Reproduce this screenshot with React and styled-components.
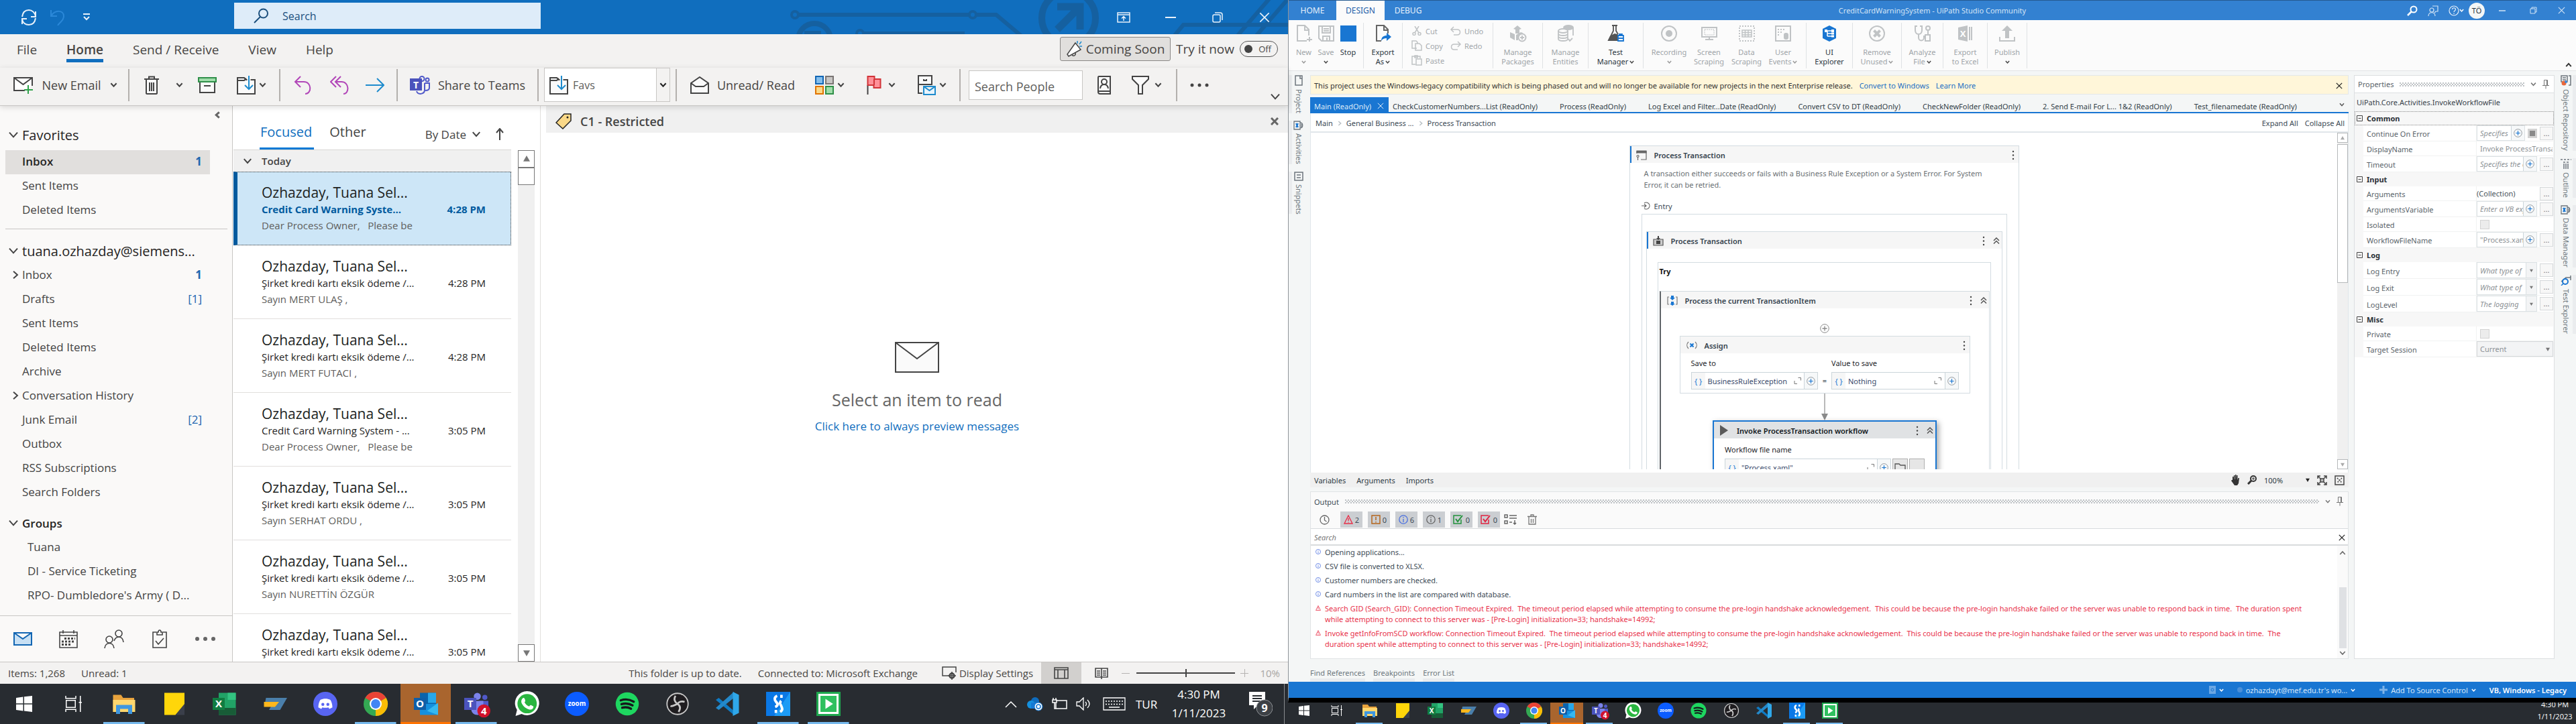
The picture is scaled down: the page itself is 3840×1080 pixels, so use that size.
import React from "react";
import styled, { createGlobalStyle, css } from "styled-components";

const Global = createGlobalStyle`
  *, *::before, *::after { box-sizing: border-box; }
  body { margin: 0; background: #282c31; font-family: "Open Sans", "Noto Sans", sans-serif; color: #444; }
  button, input, select { font: inherit; color: inherit; background: none; border: 0; padding: 0; margin: 0; border-radius: 0; outline: 0; min-width: 0; }
  button { white-space: nowrap; }
  select { appearance: none; }
  a { color: inherit; text-decoration: none; }
  svg { display: block; flex: none; }
`;

/* ---------- shared pieces ---------- */

const Desktop = styled.div`
  display: grid;
  grid-template-columns: 1fr 1fr;
  height: 100vh;
  overflow: hidden;
`;

const Screen = styled.div`
  display: flex;
  flex-direction: column;
  min-width: 0;
  min-height: 0;
`;

const Spacer = styled.div`
  flex: 1;
`;

const Icon = ({ w = 24, h = w, box = `0 0 ${w} ${h}`, color = "#444", sw = 2, children }) => (
  <svg width={w} height={h} viewBox={box} fill="none" stroke={color} strokeWidth={sw} aria-hidden="true">
    {children}
  </svg>
);

const turns = { down: 0, left: 90, up: 180, right: 270 };
const Chevron = ({ size = 12, dir = "down", color = "#444", sw = 2 }) => (
  <svg width={size} height={size} viewBox="0 0 12 12" fill="none" stroke={color} strokeWidth={(sw * 12) / size} aria-hidden="true">
    <path d="M1.5 3.5 6 8.5 10.5 3.5" transform={`rotate(${turns[dir]} 6 6)`} />
  </svg>
);

const Cross = ({ size = 12, color = "#444", sw = 1.5 }) => (
  <Icon w={size} box="0 0 12 12" color={color} sw={sw}>
    <path d="M1 1 11 11M11 1 1 11" />
  </Icon>
);

const Triangle = ({ up, color = "#777", size = 8 }) => (
  <svg width={size} height={size} viewBox="0 0 8 8" aria-hidden="true">
    <path d={up ? "M0 7 4 0 8 7Z" : "M0 1 4 8 8 1Z"} fill={color} />
  </svg>
);

const Pin = () => (
  <Icon w={10} h={14} color="#777" sw={1}>
    <path d="M2.500.5h5v8M2.500.5v8M0 8.500h10M5 8.500v5M6.500 1v7" />
  </Icon>
);

/* ---------- taskbar ---------- */

const Bar = styled.footer`
  flex: none;
  display: flex;
  height: ${(p) => (p.$compact ? 32 : 60)}px;
  background: #282c31;
  color: #fff;
  overflow: hidden;
`;

const TaskButton = styled.button`
  display: flex;
  justify-content: center;
  align-items: ${(p) => (p.$compact ? "flex-start" : "center")};
  width: ${(p) => (p.$compact ? 49 : 75)}px;
  background: ${(p) => (p.$active ? "#a9652e" : "none")};
  background-image: ${(p) =>
    p.$open ? "linear-gradient(#76b9ed, #76b9ed)" : p.$active ? "linear-gradient(#ff7300, #ff7300)" : "none"};
  background-repeat: no-repeat;
  background-position: bottom center;
  background-size: ${(p) => (p.$open ? "82%" : "100%")} ${(p) => (p.$compact ? 2 : 3)}px;
  &:first-child { width: ${(p) => (p.$compact ? 48 : 72)}px; }
  svg { overflow: visible; }
`;

const glyph = { stroke: "none", fontFamily: "Open Sans, sans-serif", fontWeight: 700, textAnchor: "middle" };

const apps = [
  { name: "Start", art: <path fill="#fff" stroke="none" d="M4 6 11 5v6.500H4zM12 4.800 20 4v7.500h-8zM4 12.500h7V19l-7-1zM12 12.500h8V20l-8-1z" /> },
  { name: "Task View", art: <path stroke="#fff" strokeWidth="1" d="M4 4v2.500h10V4M4.500 8.500h9v7h-9zM4 20v-2.500h10V20M18.500 4v16M17 10.500h3" /> },
  { name: "File Explorer", open: true, art: (<g stroke="none"><path fill="#e8a33d" d="M1 3h8l2 3h11v14H1z" /><path fill="#ffd76e" d="M1 8h22v12H1z" /><path fill="#3f97df" d="M4 13h16v9h-4v-5H8v5H4z" /></g>) },
  { name: "Sticky Notes", art: (<g stroke="none"><path fill="#ffd60a" d="M2 1h20v12l-9 10H2z" /><path fill="#3a3f4a" d="M22 12v11h-9z" /></g>) },
  { name: "Excel", art: (<g stroke="none"><path fill="#21a366" d="M6 1h17v22H6z" /><path fill="#33c481" d="M15 1h8v7h-8z" /><path fill="#185c37" d="M6 16h17v7H6z" /><path fill="#107c41" d="M0 6h12v12H0z" /><text x="6" y="15.500" fontSize="10" fill="#fff" {...glyph}>X</text></g>) },
  { name: "VMware", art: (<g stroke="none"><path fill="#4a7fab" d="M3 6h21l-7 12H6l4-7H2z" /><path fill="#ffb81c" d="M1 10h15l-4 5H1z" /></g>) },
  { name: "Discord", art: (<g stroke="none"><circle cx="12" cy="12" r="12" fill="#5865f2" /><path fill="#fff" d="M7 8c3-1.500 7-1.500 10 0 1.500 2.500 2 5 2 7.500l-3 1.500-1-1.500c-2 .5-4 .5-6 0L8 17l-3-1.500C5 13 5.500 10.500 7 8z" /><circle cx="9.500" cy="12.500" r="1.500" fill="#5865f2" /><circle cx="14.500" cy="12.500" r="1.500" fill="#5865f2" /></g>) },
  { name: "Chrome", open: true, art: (<g stroke="none"><circle cx="12" cy="12" r="12" fill="#34a853" /><path fill="#ea4335" d="M12 12 1.600 6a12 12 0 0 1 20.800 0z" /><path fill="#fbbc05" d="M12 12 22.400 6A12 12 0 0 1 12 24z" /><circle cx="12" cy="12" r="6" fill="#fff" /><circle cx="12" cy="12" r="4.600" fill="#4285f4" /></g>) },
  { name: "Outlook", active: true, art: (<g stroke="none"><path fill="#0a64ad" d="M6 1h16v12H6z" /><path fill="#28a8ea" d="M14 1h8v10h-8z" /><path fill="#1490df" d="M6 12h18v11H6z" /><path fill="#35b8f1" d="m24 11-11 8 11 4z" /><path fill="#0f5ea8" d="M0 6h12v12H0z" /><text x="6" y="15.500" fontSize="10" fill="#fff" {...glyph}>O</text></g>) },
  { name: "Teams", open: true, art: (<g stroke="none"><circle cx="13" cy="4.500" r="3.500" fill="#7b83eb" /><circle cx="20.500" cy="5.500" r="2.500" fill="#5059c9" /><path fill="#5059c9" d="M15 9h9v7c0 5-6 5-8 2z" /><path fill="#7b83eb" d="M7 9h12v8c0 8-12 8-12 0z" /><path fill="#4b53bc" d="M0 6h12v12H0z" /><text x="6" y="15.500" fontSize="10" fill="#fff" {...glyph}>T</text><circle cx="19.500" cy="19" r="6.500" fill="#d0112b" /><text x="19.500" y="22.500" fontSize="10" fill="#fff" {...glyph}>4</text></g>) },
  { name: "WhatsApp", art: (<g stroke="none"><path fill="#fff" d="m1 24 1.500-6A12 12 0 1 1 7 22z" /><circle cx="12.500" cy="11.800" r="9.600" fill="#2ab540" /><path fill="#fff" d="M8 6.500c1-1 2-.5 2.500 1.500s-.5 2-.5 2.500c1 2 2.500 3.200 4.500 4 .6-.3 1-1.500 1.800-1.300l2.500 1.300c0 3-2.500 3.500-4.500 3-3.500-1-6.500-4-7.500-7-.3-1.500.2-3 1.200-4z" /></g>) },
  { name: "Zoom", art: (<g stroke="none"><circle cx="12" cy="12" r="12" fill="#0b5cff" /><text x="12" y="14" fontSize="6.500" fill="#fff" {...glyph}>zoom</text></g>) },
  { name: "Spotify", art: (<g><circle cx="12" cy="12" r="11.500" fill="#1ed760" stroke="none" /><path stroke="#16191c" strokeWidth="2.200" strokeLinecap="round" d="M5.500 8.500c4.500-1.500 9-1 13 1.300M6.300 12.300c4-1.200 7.500-.8 11 1.200M7 15.800c3.200-.9 6-.6 8.800 1" /></g>) },
  { name: "OBS Studio", art: (<g><circle cx="12" cy="12" r="10.500" fill="#1f1d20" stroke="#c9c9c9" strokeWidth="1.200" /><path stroke="#c9c9c9" strokeWidth="1.800" d="M10 4c-2 3-1 6 2 8M19 10c-3-1-6 0-7 2M13 20c2-3 2-6-1-8M12 12c-3 1-5 3-7 2" /></g>) },
  { name: "Visual Studio Code", art: (<g stroke="none"><path fill="#0f7bc4" d="m0 8 3-2 15 13v4z" /><path fill="#2489ca" d="m0 16 3 2L18 6V0z" /><path fill="#2fa8ea" d="m17 0 6 3v18l-6 3z" /></g>) },
  { name: "UiPath Studio", open: true, art: (<g><path fill="#0a78e6" stroke="none" d="M0 0h24v24H0z" /><path fill="#1c9bf5" stroke="none" d="M24 0v24H8z" /><path stroke="#fff" strokeWidth="2.600" d="M11 4c-3 1-3 4-1 6s2 4-1 5M15 9c-2 2-1 3 0 5s2 4-1 6" /><path fill="#fff" stroke="none" d="M14 3h2.500v3H14zM8.500 18H11v3H8.500z" /></g>) },
  { name: "UiPath Assistant", open: true, art: (<g stroke="none"><path fill="#1fa84f" d="M0 0h24v24H0z" /><path fill="#fff" d="M2 2h20v20H2z" /><path fill="#2fc05f" d="M4 4h16v16H4z" /><path fill="#fff" d="m9 7 7.500 5L9 17z" /></g>) },
];

const TaskApps = ({ compact }) =>
  apps.map((a) => (
    <TaskButton key={a.name} aria-label={a.name} $compact={compact} $open={a.open} $active={a.active}>
      <svg width={compact ? 24 : 36} height={compact ? 24 : 36} viewBox="0 0 24 24" fill="none">{a.art}</svg>
    </TaskButton>
  ));

const Tray = styled.div`
  display: flex;
  align-items: center;
  font-size: 17px;
`;
const TrayCell = styled.div`
  display: flex;
  justify-content: center;
  width: ${(p) => p.$w}px;
`;
const Clock = styled.time`
  display: flex;
  flex-direction: column;
  justify-content: flex-end;
  align-items: center;
  width: ${(p) => (p.$compact ? 63 : 112)}px;
  padding-bottom: ${(p) => (p.$compact ? 2 : 1)}px;
  font-size: ${(p) => (p.$compact ? 11 : 17)}px;
  line-height: ${(p) => (p.$compact ? 18 : 28)}px;
`;
const DesktopEdge = styled.div`
  width: 6px;
  align-self: stretch;
  border-left: 1px solid #8a8d90;
`;

/* ---------- mail window ---------- */

const MailTitle = styled.header`
  position: relative;
  flex: none;
  display: flex;
  align-items: center;
  height: 51px;
  background: #106ebe;
  overflow: hidden;
`;
const Circuit = styled.svg`
  position: absolute;
  right: 0;
  top: 0;
`;
const QuickTools = styled.div`
  display: flex;
  align-items: center;
  width: 349px;
  padding-left: 21px;
`;
const QuickButton = styled.button`
  display: flex;
  justify-content: center;
  width: 43px;
`;
const TitleSearch = styled.label`
  display: flex;
  align-items: center;
  gap: 20px;
  width: 457px;
  height: 39px;
  margin-bottom: 4px;
  padding-left: 29px;
  background: #deecf9;
  color: #1b4f7d;
  font-size: 16px;
  input { flex: 1; }
  input::placeholder { color: #1b4f7d; opacity: 1; }
`;
const WindowButton = styled.button`
  position: relative;
  display: flex;
  justify-content: center;
  align-items: center;
  width: ${(p) => p.$w || 70}px;
`;

const TabRow = styled.nav`
  flex: none;
  display: flex;
  align-items: center;
  height: 50px;
  padding: 0 15px 0 25px;
  background: #f3f2f1;
  font-size: 19px;
  color: #484644;
`;
const MenuTab = styled.button`
  height: 34px;
  margin-right: 44px;
  line-height: 28px;
  border-bottom: 5px solid ${(p) => (p.$on ? "#106ebe" : "transparent")};
  font-weight: ${(p) => (p.$on ? 600 : 400)};
`;
const ComingSoon = styled.button`
  display: flex;
  align-items: center;
  justify-content: center;
  gap: 6px;
  width: 165px;
  height: 36px;
  margin: 0 8px 6px 0;
  background: #e1dfdd;
  border: 1px solid #8a8886;
  border-radius: 3px;
`;
const TryToggle = styled.label`
  display: flex;
  align-items: center;
  gap: 8px;
  height: 36px;
  margin-bottom: 6px;
`;
const Toggle = styled.span`
  display: flex;
  align-items: center;
  justify-content: space-between;
  width: 57px;
  height: 24px;
  padding: 0 9px 0 6px;
  border: 1px solid #555;
  border-radius: 12px;
  font-size: 13px;
  input { appearance: none; width: 12px; height: 12px; border-radius: 50%; background: #444; }
`;

const Toolbar = styled.div`
  position: relative;
  z-index: 1;
  flex: none;
  display: flex;
  align-items: center;
  height: 57px;
  padding: 0 11px 5px 18px;
  background: #f3f2f1;
  border-bottom: 1px solid #c8c6c4;
  box-shadow: 0 2px 8px rgba(0, 0, 0, 0.14);
  font-size: 18px;
  color: #484644;
`;
const Cmd = styled.button`
  display: flex;
  align-items: center;
  justify-content: center;
  gap: ${(p) => p.$gap || 5}px;
  width: ${(p) => p.$w}px;
`;
const Rule = styled.i`
  width: 2px;
  height: 48px;
  margin: 0 5px;
  background: #b3b0ad;
`;
const FolderCombo = styled.label`
  display: flex;
  align-items: center;
  width: 188px;
  height: 51px;
  margin: 0 3px;
  padding-left: 7px;
  background: #fff;
  border: 1px solid #c8c6c4;
  font-size: 16px;
  color: #605e5c;
  select { flex: 1; padding-left: 7px; }
`;
const ComboArrow = styled.span`
  display: flex;
  align-items: center;
  justify-content: center;
  align-self: stretch;
  width: 20px;
  background: #f3f2f1;
  border-left: 1px solid #c8c6c4;
  pointer-events: none;
`;
const PeopleSearch = styled.input`
  width: 170px;
  height: 44px;
  margin: 0 7px;
  padding: 4px 0 0 8px;
  background: #fff;
  border: 1px solid #c8c6c4;
  &::placeholder { color: #605e5c; opacity: 1; }
`;
const CollapseRibbon = styled.button`
  align-self: flex-end;
`;

const MailBody = styled.div`
  flex: 1;
  display: flex;
  min-height: 0;
  background: #fff;
`;
const FolderPane = styled.aside`
  flex: none;
  display: flex;
  flex-direction: column;
  width: 347px;
  background: #faf9f8;
  border-right: 1px solid #c8c6c4;
  color: #444;
`;
const CollapsePane = styled.button`
  display: flex;
  align-self: flex-end;
  align-items: center;
  height: 26px;
  padding-right: 16px;
`;
const FolderHead = styled.button`
  display: flex;
  align-items: center;
  gap: 5px;
  height: 36px;
  padding: 0 0 2px 12px;
  font-size: ${(p) => (p.$small ? 17 : 20)}px;
  font-weight: ${(p) => (p.$small ? 600 : 400)};
  color: #252423;
`;
const FolderList = styled.ul`
  list-style: none;
  margin: 0;
  padding: ${(p) => p.$top || 0}px 0 ${(p) => p.$bottom || 0}px;
`;
const Folder = styled.li`
  display: grid;
  grid-template-columns: 25px 1fr auto;
  align-items: center;
  height: 36px;
  margin: 0 33px 0 8px;
  padding: 0 12px 3px ${(p) => (p.$nested ? 8 : 0)}px;
  font-size: 17px;
  white-space: nowrap;
  ${(p) => p.$on && css`background: #e1dfdd; color: #252423; font-weight: 600;`}
`;
const FolderLink = styled.a`
  grid-column: 2;
`;
const Twisty = styled.span`
  grid-column: 1;
  grid-row: 1;
  padding-left: 8px;
`;
const Count = styled.span`
  color: #2266b0;
  font-weight: ${(p) => (p.$strong ? 700 : 400)};
`;
const FolderDivider = styled.hr`
  margin: 9px 7px 15px 8px;
  border: 0;
  border-top: 1px solid #c8c6c4;
`;
const ModuleBar = styled.nav`
  display: flex;
  align-items: center;
  height: 69px;
  margin-top: auto;
  border-top: 1px solid #c8c6c4;
`;
const ModuleButton = styled.button`
  display: flex;
  justify-content: center;
  width: 68px;
`;

const ListPane = styled.section`
  flex: none;
  display: flex;
  width: 459px;
  padding: 0 8px 0 1px;
  border-right: 1px solid #e1dfdd;
`;
const ListColumn = styled.div`
  flex: 1;
  min-width: 0;
  display: flex;
  flex-direction: column;
  overflow: hidden;
`;
const ListHead = styled.div`
  flex: none;
  display: flex;
  align-items: flex-end;
  height: 66px;
  padding: 0 8px 0 39px;
  border-bottom: 1px solid #d8d6d4;
`;
const ListTab = styled.button`
  height: 50px;
  margin-right: 22px;
  padding: 0 3px 0 1px;
  border-bottom: 3px solid ${(p) => (p.$on ? "#0078d4" : "transparent")};
  font-size: 20px;
  color: ${(p) => (p.$on ? "#106ebe" : "#444")};
`;
const SortButton = styled.button`
  display: flex;
  align-items: center;
  gap: 8px;
  height: 46px;
  font-size: 17px;
`;
const DayHead = styled.button`
  flex: none;
  display: flex;
  align-items: center;
  gap: 14px;
  height: 32px;
  padding-left: 14px;
  background: #f0f0f0;
  font-size: 15px;
  font-weight: 600;
`;
const Mail = styled.article`
  flex: none;
  height: 110px;
  padding: 16px 38px 0 ${(p) => (p.$on ? 36 : 42)}px;
  border-bottom: 1px solid #e1dfdd;
  ${(p) =>
    p.$on &&
    css`
      background: #cde6f7;
      border: 1px dotted #333;
      border-left: 6px solid #005a9e;
      padding-top: 15px;
      padding-right: 37px;
    `}
`;
const Sender = styled.div`
  font-size: 21px;
  line-height: 30px;
  color: #201f1e;
`;
const SubjectLine = styled.div`
  display: flex;
  justify-content: space-between;
  font-size: 15px;
  line-height: 20px;
  white-space: nowrap;
  color: ${(p) => (p.$on ? "#005a9e" : "#252423")};
  font-weight: ${(p) => (p.$on ? 700 : 400)};
`;
const Preview = styled.div`
  font-size: 15px;
  line-height: 28px;
  color: #605e5c;
  white-space: pre;
`;
const ListScroll = styled.div`
  display: flex;
  flex-direction: column;
  width: 25px;
  margin: 66px 0 0 10px;
  background: #f0f0f0;
`;
const ScrollButton = styled.button`
  display: flex;
  align-items: center;
  justify-content: center;
  height: ${(p) => p.$h || 26}px;
  background: #fff;
  border: 1px solid ${(p) => p.$line || "#777"};
`;

const Reading = styled.main`
  flex: 1;
  display: flex;
  flex-direction: column;
  margin-left: 8px;
  min-width: 0;
`;
const LabelBar = styled.div`
  display: flex;
  align-items: center;
  gap: 13px;
  height: 40px;
  padding: 5px 14px 0 14px;
  background: #f0f0f0;
  font-size: 18px;
  font-weight: 600;
`;
const EmptyState = styled.div`
  flex: 1;
  display: flex;
  flex-direction: column;
  align-items: center;
  justify-content: center;
  padding-bottom: 28px;
`;
const EmptyTitle = styled.h2`
  margin: 23px 0 11px;
  font-size: 25px;
  font-weight: 400;
  line-height: 34px;
  color: #666;
`;
const EmptyLink = styled.a`
  font-size: 17px;
  line-height: 24px;
  color: #106ebe !important;
`;

const MailStatus = styled.div`
  flex: none;
  display: flex;
  align-items: center;
  height: 33px;
  padding: 0 12px;
  background: #f3f2f1;
  border-top: 1px solid #c8c6c4;
  font-size: 15px;
  white-space: nowrap;
  color: #484644;
`;
const StatusText = styled.span`
  margin-right: 24px;
`;
const ViewButton = styled.button`
  display: flex;
  align-items: center;
  justify-content: center;
  gap: 4px;
  align-self: stretch;
  width: ${(p) => p.$w || 60}px;
  background: ${(p) => (p.$on ? "#d2d0ce" : "none")};
`;
const ZoomRange = styled.input`
  appearance: none;
  width: 147px;
  height: 12px;
  margin: 0 8px;
  background: linear-gradient(#444, #444) center / 100% 2px no-repeat;
  &::-webkit-slider-thumb { appearance: none; width: 2px; height: 12px; background: #444; }
`;
const ZoomStep = styled.button`
  width: 14px;
`;
const ZoomValue = styled.output`
  width: 45px;
  text-align: right;
  color: #a8a6a4;
`;

const folders = [
  { name: "Inbox", count: "1", strong: true, more: true },
  { name: "Drafts", count: "[1]" },
  { name: "Sent Items" },
  { name: "Deleted Items" },
  { name: "Archive" },
  { name: "Conversation History", more: true },
  { name: "Junk Email", count: "[2]" },
  { name: "Outbox" },
  { name: "RSS Subscriptions" },
  { name: "Search Folders" },
];
const FolderRow = ({ name, count, strong, more, on, nested }) => (
  <Folder $on={on} $nested={nested}>
    {more && <Twisty><Chevron dir="right" size={14} /></Twisty>}
    <FolderLink href="#">{name}</FolderLink>
    {count && <Count $strong={strong}>{count}</Count>}
  </Folder>
);

const kredi = "Şirket kredi kartı eksik ödeme /...";
const mails = [
  { subject: "Credit Card Warning Syste...", time: "4:28 PM", text: "Dear Process Owner,   Please be", on: true },
  { subject: kredi, time: "4:28 PM", text: "Sayın MERT ULAŞ ," },
  { subject: kredi, time: "4:28 PM", text: "Sayın MERT FUTACI ," },
  { subject: "Credit Card Warning System - ...", time: "3:05 PM", text: "Dear Process Owner,   Please be" },
  { subject: kredi, time: "3:05 PM", text: "Sayın SERHAT ORDU ," },
  { subject: kredi, time: "3:05 PM", text: "Sayın NURETTİN ÖZGÜR" },
  { subject: kredi, time: "3:05 PM", text: "" },
];

const MoveIcon = () => (
  <Icon w={28} sw={2}>
    <path fill="#fafafa" d="M1 3h10l3 3h13v21H1z" /><path d="M1 7h10l3-3" />
    <path stroke="#fafafa" strokeWidth="5" d="M18 0v17" />
    <path stroke="#1e8bcd" d="M18 0v20M12 14l6 6 6-6" />
  </Icon>
);
const ReplyArt = "M10 1 2 9l8 8M2 9h13c12 0 12 18 2 18";

function MailWindow() {
  return (
    <Screen>
      <MailTitle>
        <Circuit width="750" height="51" viewBox="1170 0 750 51" fill="none" stroke="#1560a0" strokeWidth="6" aria-hidden="true">
          <circle cx="1185" cy="22" r="5" strokeWidth="4" /><path d="M1191 22h253M1455 22h30l38 32" /><circle cx="1450" cy="22" r="5" strokeWidth="4" />
          <circle cx="1214" cy="59" r="24" strokeWidth="8" /><path d="M1199 49h25" />
          <circle cx="1282" cy="50" r="5" strokeWidth="4" /><path d="M1288 50h150" />
          <circle cx="1593" cy="27" r="40" strokeWidth="10" /><path strokeWidth="11" d="M1576 10h34v34M1610 10l-34 34" />
          <path d="M1750 54l14-17h156M1844 54l50-58M1872 54l50-58" />
        </Circuit>
        <QuickTools>
          <QuickButton aria-label="Send and receive">
            <Icon color="#e8f1fa"><path d="M2 11C3 4 7 1 12 1s9 4 10 9M22 3v8h-7M22 13c-1 7-5 10-10 10S3 20 2 15M2 22v-8h7" /></Icon>
          </QuickButton>
          <QuickButton aria-label="Undo">
            <Icon color="#2b88d8"><path d="M2 1v9h9M2 10C8 0 21 1 21 10c0 7-5 8-9 14" /></Icon>
          </QuickButton>
          <QuickButton aria-label="Customize toolbar">
            <Icon w={12} color="#e8f1fa"><path d="M1 1h10M2 5l4 4 4-4" /></Icon>
          </QuickButton>
        </QuickTools>
        <TitleSearch>
          <Icon w={23} color="#1b4f7d"><circle cx="14.500" cy="8" r="6.500" /><path d="m10 13-9 9" /></Icon>
          <input placeholder="Search" aria-label="Search mail" />
        </TitleSearch>
        <Spacer />
        <WindowButton aria-label="Ribbon display options"><Icon w={20} h={16} color="#e8f1fa" sw={1.5}><path d="M1 1h18v14H1zM1 4h18M10 13V7M7 9.500l3-3 3 3" /></Icon></WindowButton>
        <WindowButton aria-label="Minimize"><Icon w={16} h={2} color="#e8f1fa"><path d="M0 1h16" /></Icon></WindowButton>
        <WindowButton aria-label="Restore"><Icon w={16} color="#e8f1fa" sw={1.5}><rect x="1" y="4" width="11" height="11" rx="2" /><path d="M4 1h8q3 0 3 3v8" /></Icon></WindowButton>
        <WindowButton aria-label="Close"><Cross size={16} color="#e8f1fa" sw={1.2} /></WindowButton>
      </MailTitle>

      <TabRow>
        <MenuTab>File</MenuTab>
        <MenuTab $on>Home</MenuTab>
        <MenuTab>Send / Receive</MenuTab>
        <MenuTab>View</MenuTab>
        <MenuTab>Help</MenuTab>
        <Spacer />
        <ComingSoon>
          <Icon w={24} sw={1.5}><path fill="#fff" d="M14 3 2 20l2 3 18-10z" /><path d="M9 21c3 3 6 0 5-3" /><path stroke="#1e8bcd" d="M17 0v4M23 1l-3 4M24 8h-4" /></Icon>
          Coming Soon
        </ComingSoon>
        <TryToggle>
          Try it now
          <Toggle><input type="checkbox" role="switch" />Off</Toggle>
        </TryToggle>
      </TabRow>

      <Toolbar>
        <Cmd $w={135} $gap={12}>
          <Icon w={30} h={26}><path fill="#fff" d="M17 21H1V2h27v12" /><path d="m1 2 13.500 10L28 2" /><path stroke="#2fa24a" d="M22 13v13M16 20h13" /></Icon>
          New Email
        </Cmd>
        <Cmd $w={33} aria-label="New item options"><Chevron size={11} /></Cmd>
        <Rule />
        <Cmd $w={56} aria-label="Delete"><Icon w={22} h={28}><path fill="#fafafa" d="M3 6v20q0 1 2 1h12q2 0 2-1V6" /><path d="M0 5h22M7 5V1.500h8V5M8 10v13M11 10v13M14 10v13" /></Icon></Cmd>
        <Cmd $w={26} aria-label="Delete options"><Chevron size={11} /></Cmd>
        <Cmd $w={58} aria-label="Archive"><Icon w={28} h={24}><path fill="#fafafa" d="M3 7h22v16H3z" /><path fill="#a0dcaa" stroke="#2f8f49" d="M1 1h26v6H1z" /><path d="M9 13h10" /></Icon></Cmd>
        <Cmd $w={73} aria-label="Move"><MoveIcon /><Chevron size={11} /></Cmd>
        <Rule />
        <Cmd $w={58} aria-label="Reply"><Icon w={28} color="#b146b8"><path d={ReplyArt} /></Icon></Cmd>
        <Cmd $w={51} aria-label="Reply all"><Icon w={30} h={28} color="#b146b8"><path d="M9 1 1 9l8 8M16 1 8 9l8 8M8 9h9c12 0 12 18 3 18" /></Icon></Cmd>
        <Cmd $w={54} aria-label="Forward"><Icon w={28} h={22} color="#1e8bcd"><path d="M0 11h27M17 1l10 10-10 10" /></Icon></Cmd>
        <Rule />
        <Cmd $w={198} $gap={12}>
          <Icon w={30} h={28}><g stroke="#5059c9"><circle cx="18" cy="4.500" r="3.500" /><circle cx="26" cy="6" r="2.500" /><path d="M22 11h7v7c0 3-3 4-6 4M22 11v10c0 7-10 8-12 2" /></g><path fill="#4b53bc" stroke="none" d="M0 4h18v18H0z" /><text x="9" y="18.500" fontSize="14" fill="#fff" {...glyph}>T</text></Icon>
          Share to Teams
        </Cmd>
        <Rule />
        <FolderCombo>
          <MoveIcon />
          <select aria-label="Quick steps"><option>Favs</option></select>
          <ComboArrow><Chevron size={11} color="#222" /></ComboArrow>
        </FolderCombo>
        <Rule />
        <Cmd $w={186} $gap={12}>
          <Icon w={28} h={26}><path fill="#fafafa" d="M1 10 14 1l13 9v15H1z" /><path d="m1 10 7 5h12l7-5" /></Icon>
          Unread/ Read
        </Cmd>
        <Cmd $w={73} aria-label="Categorize">
          <Icon w={28}><path fill="#83beec" stroke="#1266b3" d="M1 1h11v11H1z" /><path fill="#c8c6c4" stroke="#7a7574" d="M16 1h11v11H16z" /><path fill="#fad888" stroke="#e07300" d="M1 16h11v11H1z" /><path fill="#a0dcaa" stroke="#309048" d="M16 16h11v11H16z" /></Icon>
          <Chevron size={11} />
        </Cmd>
        <Cmd $w={80} $gap={10} aria-label="Follow up">
          <Icon w={22} h={28}><path d="M1.500 14v14" /><path fill="#ff9199" stroke="#d13438" d="M1.500 1h10v4h9v13h-10v-4h-9zM11 5v9" /></Icon>
          <Chevron size={11} />
        </Cmd>
        <Cmd $w={72} aria-label="Rules">
          <Icon w={28} h={30}><path fill="#fafafa" d="M8 27H2V1h20v13H2" /><path d="M10 6v2h4V6" /><path fill="#e8f4fc" stroke="#1e8bcd" d="M10 17h17v12H10zM10 17l8.500 6 8.500-6" /></Icon>
          <Chevron size={11} />
        </Cmd>
        <Rule />
        <PeopleSearch placeholder="Search People" aria-label="Search People" />
        <Cmd $w={50} aria-label="Address book"><Icon w={20} h={28}><path fill="#fafafa" d="M2 1h17v26H4q-3 0-3-3V3q0-2 1-2zM1 23h18" /><circle cx="10" cy="9" r="4" /><path d="M4 19c1-8 11-8 12 0" /></Icon></Cmd>
        <Cmd $w={77} $gap={8} aria-label="Filter email"><Icon w={26} h={28}><path fill="#fafafa" d="M1 1h24v4l-9 9v13h-6V14L1 5z" /></Icon><Chevron size={11} /></Cmd>
        <Rule />
        <Cmd $w={56} aria-label="More commands"><Icon w={28} h={6}><g fill="#444" stroke="none"><circle cx="3" cy="3" r="2.500" /><circle cx="14" cy="3" r="2.500" /><circle cx="25" cy="3" r="2.500" /></g></Icon></Cmd>
        <Spacer />
        <CollapseRibbon aria-label="Collapse ribbon"><Chevron size={16} /></CollapseRibbon>
      </Toolbar>

      <MailBody>
        <FolderPane>
          <CollapsePane aria-label="Collapse folder pane"><Chevron dir="left" size={11} sw={3} color="#666" /></CollapsePane>
          <FolderHead><Chevron size={16} />Favorites</FolderHead>
          <FolderList $top={4}>
            <FolderRow name="Inbox" count="1" strong on />
            <FolderRow name="Sent Items" />
            <FolderRow name="Deleted Items" />
          </FolderList>
          <FolderDivider />
          <FolderHead><Chevron size={16} />tuana.ozhazday@siemens...</FolderHead>
          <FolderList $bottom={10}>
            {folders.map((f) => <FolderRow key={f.name} {...f} />)}
          </FolderList>
          <FolderHead $small><Chevron size={16} />Groups</FolderHead>
          <FolderList>
            <FolderRow nested name="Tuana" />
            <FolderRow nested name="DI - Service Ticketing" />
            <FolderRow nested name="RPO- Dumbledore's Army ( D..." />
          </FolderList>
          <ModuleBar>
            <ModuleButton aria-label="Mail"><Icon w={28} h={20} color="#1266b3"><path fill="#c7e0f4" d="M1 1h26v18H1zM1 1l13 9L27 1" /></Icon></ModuleButton>
            <ModuleButton aria-label="Calendar"><Icon w={28} h={28} sw={1.6}><path d="M1 4h26v23H1zM1 9h26M6 1v5M22 1v5" /><path strokeDasharray="3 2" strokeWidth="3" d="M8 13.500h16M4 18h20M4 22.500h13" /></Icon></ModuleButton>
            <ModuleButton aria-label="People"><Icon w={30} h={28} sw={1.6}><circle cx="22" cy="6" r="5" /><circle cx="8" cy="15" r="5" /><path d="M1 28c1-10 13-10 14 0M15 17c3-8 13-8 14 2" /></Icon></ModuleButton>
            <ModuleButton aria-label="Tasks"><Icon w={22} h={28} sw={1.6}><path d="M6 4H1v23h20V4h-5M7 8V4h2c0-4 4-4 4 0h2v4zM5 17l4 5 8-9" /></Icon></ModuleButton>
            <ModuleButton aria-label="More"><Icon w={30} h={6}><g fill="#666" stroke="none"><circle cx="3" cy="3" r="3" /><circle cx="15" cy="3" r="3" /><circle cx="27" cy="3" r="3" /></g></Icon></ModuleButton>
          </ModuleBar>
        </FolderPane>

        <ListPane>
          <ListColumn>
            <ListHead>
              <ListTab $on>Focused</ListTab>
              <ListTab>Other</ListTab>
              <Spacer />
              <SortButton>By Date<Chevron size={14} /></SortButton>
              <SortButton aria-label="Sort direction"><Icon w={37} h={18}><path d="M28 18V1M23 7l5-6 5 6" /></Icon></SortButton>
            </ListHead>
            <DayHead><Chevron size={14} />Today</DayHead>
            {mails.map((m, i) => (
              <Mail key={i} $on={m.on}>
                <Sender>Ozhazday, Tuana Sel...</Sender>
                <SubjectLine $on={m.on}><span>{m.subject}</span><span>{m.time}</span></SubjectLine>
                <Preview>{m.text}</Preview>
              </Mail>
            ))}
          </ListColumn>
          <ListScroll>
            <ScrollButton aria-label="Scroll up"><Triangle up size={10} /></ScrollButton>
            <ScrollButton aria-label="Scroll position" />
            <Spacer />
            <ScrollButton aria-label="Scroll down"><Triangle size={10} /></ScrollButton>
          </ListScroll>
        </ListPane>

        <Reading>
          <LabelBar>
            <Icon w={24} color="#222" sw={1.5}><path fill="#fad888" d="M13 1h10v10L11 23 1 14z" /><circle cx="18" cy="6" r="1.500" fill="#222" stroke="none" /></Icon>
            C1 - Restricted
            <Spacer />
            <button aria-label="Close label"><Cross size={12} color="#666" sw={3} /></button>
          </LabelBar>
          <EmptyState>
            <Icon w={66} h={46}><path fill="#fafafa" d="M1 1h64v44H1zM1 1l32 24L65 1" /></Icon>
            <EmptyTitle>Select an item to read</EmptyTitle>
            <EmptyLink href="#">Click here to always preview messages</EmptyLink>
          </EmptyState>
        </Reading>
      </MailBody>

      <MailStatus>
        <StatusText>Items: 1,268</StatusText>
        <StatusText>Unread: 1</StatusText>
        <Spacer />
        <StatusText>This folder is up to date.</StatusText>
        <StatusText>Connected to: Microsoft Exchange</StatusText>
        <ViewButton $w={160}>
          <Icon w={22} h={20} sw={1.5}><path d="M10 14H1V1h20v8" /><circle cx="15" cy="14" r="3.500" strokeWidth="2.500" /><path d="M15 8v12M9 14h12" strokeWidth="1.500" /></Icon>
          Display Settings
        </ViewButton>
        <ViewButton $on aria-label="Normal view"><Icon w={22} h={18} sw={1.6}><path d="M1 1h20v16H1zM1 4h20M6 4v13M16 4v13" /></Icon></ViewButton>
        <ViewButton aria-label="Reading view"><Icon w={20} h={18} sw={1.6}><path d="M10 2v16M10 2H1v13h9M10 2h9v13h-9M3 6h5M3 9h5M3 12h5M12 6h5M12 9h5M12 12h5" /></Icon></ViewButton>
        <ZoomStep aria-label="Zoom out"><Icon w={12} color="#b5b3b1" sw={1}><path d="M0 6.500h12" /></Icon></ZoomStep>
        <ZoomRange type="range" aria-label="Zoom" />
        <ZoomStep aria-label="Zoom in"><Icon w={12} color="#b5b3b1" sw={1}><path d="M0 6.500h12M6.500 0v12" /></Icon></ZoomStep>
        <ZoomValue>10%</ZoomValue>
      </MailStatus>

      <Bar>
        <TaskApps />
        <Spacer />
        <Tray>
          <TrayCell $w={36}><Icon w={18} h={11} color="#fff" sw={1.5}><path d="m1 10 8-8 8 8" /></Icon></TrayCell>
          <TrayCell $w={36}><Icon w={24} h={22}><g stroke="none"><circle cx="12" cy="7" r="6" fill="#0f6cbd" /><circle cx="6" cy="12" r="6" fill="#1490df" /><path fill="#1478d4" d="M6 9h14v9H6z" /></g><circle cx="17" cy="15" r="6" fill="#fff" stroke="#1478d4" strokeWidth="1" /><circle cx="17" cy="15" r="3" stroke="#1478d4" strokeWidth="1.500" /></Icon></TrayCell>
          <TrayCell $w={36}><Icon w={24} h={20} color="#fff" sw={1.5}><path d="M8 5h15v12H7V9M2 4h6v4H2zM3 1v3M7 1v3M5 8v9h2" /></Icon></TrayCell>
          <TrayCell $w={38}><Icon w={24} h={20} color="#fff" sw={1.3}><path d="M1 7h4l6-6v18l-6-6H1zM14 7c2 2 2 4 0 6M17 4c4 4 4 8 0 12" /></Icon></TrayCell>
          <TrayCell $w={52}><Icon w={34} h={20} color="#fff" sw={1.3}><path d="M1 1h32v18H1zM9 15h16" /><path strokeDasharray="2 2" d="M4 6h26M4 10.500h26" /></Icon></TrayCell>
          <TrayCell $w={44}>TUR</TrayCell>
          <Clock><span>4:30 PM</span><span>1/11/2023</span></Clock>
          <TrayCell $w={71}>
            <Icon w={36} h={38}><path fill="#fff" stroke="none" d="M1 1h24v20H14l-6 6v-6H1z" /><path stroke="#282c31" d="M6 7h14M6 11h14M6 15h14" /><circle cx="24" cy="25" r="12" fill="#3c4045" stroke="#8f9296" strokeWidth="1" /><text x="24" y="31" fontSize="16" fill="#fff" {...glyph}>9</text></Icon>
          </TrayCell>
          <DesktopEdge />
        </Tray>
      </Bar>
    </Screen>
  );
}

/* ---------- automation studio window ---------- */

const StudioFrame = styled.div`
  flex: 1;
  display: flex;
  flex-direction: column;
  min-height: 0;
  background: #f4f6f6;
  border-left: 1px solid #8f9499;
  border-bottom: 7px solid #000;
  font-family: "Noto Sans", "Open Sans", sans-serif;
  font-size: 11px;
  color: #3c4a55;
  white-space: nowrap;
`;
const StudioTitle = styled.header`
  flex: none;
  display: flex;
  align-items: center;
  height: 30px;
  background: #3381d1;
  border-top: 1px solid #255a90;
  color: #d3e4f6;
`;
const StudioTabs = styled.nav`
  flex: 1;
  display: flex;
  align-self: stretch;
`;
const StudioTab = styled.button`
  width: ${(p) => p.$w}px;
  font-size: 12px;
  background: ${(p) => (p.$on ? "#fbfbfb" : "none")};
  color: ${(p) => (p.$on ? "#1f5fa8" : "#e6f0fa")};
`;
const StudioTools = styled.div`
  flex: 1;
  display: flex;
  justify-content: flex-end;
  align-items: center;
`;
const Avatar = styled.span`
  display: grid;
  place-items: center;
  width: 24px;
  height: 24px;
  border-radius: 50%;
  background: #f4f6f6;
  color: #273139;
`;
const Ribbon = styled.div`
  flex: none;
  display: flex;
  height: 76px;
  padding: 4px 6px 3px 0;
  background: #fbfbfb;
  border-bottom: 1px solid #e2e4e6;
`;
const Group = styled.div`
  display: flex;
  justify-content: center;
  width: ${(p) => p.$w}px;
  border-right: 1px solid #dfe2e4;
`;
const ClipGroup = styled.div`
  display: grid;
  grid-auto-flow: column;
  grid-template-rows: repeat(3, 22px);
  grid-template-columns: 58px 58px;
  width: 135px;
  padding: 1px 0 0 12px;
  border-right: 1px solid #dfe2e4;
`;
const ClipButton = styled.button`
  display: flex;
  align-items: center;
  gap: 4px;
  color: #a3a8ac;
`;
const Big = styled.button`
  display: flex;
  flex-direction: column;
  align-items: center;
  width: ${(p) => p.$w}px;
  line-height: 14px;
  color: ${(p) => (p.$live ? "#2b3640" : "#a0a5a9")};
`;
const BigArt = styled.span`
  display: grid;
  place-items: center;
  height: 32px;
  margin-bottom: 5px;
`;
const BigLine = styled.span`
  display: flex;
  align-items: center;
  gap: 2px;
  height: 14px;
`;
const RibbonFold = styled.button`
  align-self: flex-end;
`;

const StudioMain = styled.div`
  flex: 1;
  display: flex;
  min-height: 0;
  padding-top: 6px;
`;
const Rail = styled.aside`
  flex: none;
  display: flex;
  flex-direction: column;
  align-items: ${(p) => (p.$right ? "flex-end" : "flex-start")};
  gap: 11px;
  width: 32px;
`;
const RailTab = styled.button`
  display: flex;
  flex-direction: column;
  align-items: center;
  gap: 5px;
  width: ${(p) => (p.$right ? 26 : 24)}px;
  border: 0 solid #eaecee;
  border-width: ${(p) => (p.$right ? "0 5px 0 0" : "0 0 0 5px")};
  color: #6d767d;
`;
const RailText = styled.span`
  writing-mode: vertical-rl;
  line-height: 16px;
`;

const Center = styled.div`
  flex: 1;
  display: flex;
  flex-direction: column;
  min-width: 0;
`;
const Banner = styled.div`
  flex: none;
  display: flex;
  align-items: center;
  gap: 10px;
  height: 29px;
  padding: 2px 8px 0 5px;
  background: #fff6d9;
  border: 1px solid #e3e8e8;
  color: #333;
`;
const BannerLink = styled.a`
  color: #1a6fc4 !important;
`;
const DocTabs = styled.nav`
  flex: none;
  display: flex;
  height: 24px;
  margin-top: 4px;
  border-bottom: 2px solid #1976d2;
`;
const DocTab = styled.button`
  display: flex;
  align-items: center;
  gap: 9px;
  padding: ${(p) => (p.$on ? "4px 7px 0 6px" : "4px 27px 0 6px")};
  background: ${(p) => (p.$on ? "#1976d2" : "none")};
  color: ${(p) => (p.$on ? "#dceaf8" : "#333f48")};
`;
const Crumbs = styled.nav`
  flex: none;
  display: flex;
  align-items: center;
  gap: 6px;
  height: 29px;
  padding: 2px 5px 0 7px;
  background: #fff;
  border: 1px solid #e0e6ea;
  border-width: 0 1px 2px;
`;
const CrumbActions = styled.div`
  display: flex;
  gap: 10px;
  margin-left: auto;
`;
const CanvasWrap = styled.div`
  flex: 1;
  display: flex;
  min-height: 0;
  padding-bottom: 5px;
  background: #fff;
  border: 1px solid #e0e6ea;
  border-width: 0 1px;
`;
const Canvas = styled.div`
  flex: 1;
  display: flex;
  flex-direction: column;
  align-items: center;
  padding-top: 19px;
  overflow: hidden;
`;
const CanvasScroll = styled.div`
  display: flex;
  flex-direction: column;
  gap: 2px;
  width: 16px;
  background: #f0f0f0;
`;
const CanvasThumb = styled.div`
  height: 207px;
  background: #fff;
  border: 1px solid #b5b8ba;
`;

const Card = styled.section`
  flex: none;
  width: ${(p) => (p.$w ? `${p.$w}px` : "auto")};
  border: 1px solid #d3dce1;
  background: #fff;
  ${(p) => p.$dark && css`border-left: 2px solid #5f6468;`}
  ${(p) => p.$selected && css`border: 2px solid #1976d2; box-shadow: 3px 3px 8px rgba(0, 0, 0, 0.35);`}
`;
const CardHead = styled.header`
  display: flex;
  align-items: center;
  gap: 11px;
  height: 25px;
  padding: 1px 4px 0 ${(p) => (p.$accent ? 7 : 9)}px;
  background: ${(p) => (p.$selected ? "#e0e2e4" : "#f6f6f6")};
  color: ${(p) => (p.$selected ? "#10161a" : "#34424d")};
  font-weight: 600;
  ${(p) => p.$accent && css`border-left: 2px solid #1976d2;`}
`;
const HeadButton = styled.button`
  display: flex;
  align-items: center;
  justify-content: center;
  width: 8px;
`;
const OuterBody = styled.div`
  padding: 0 17px;
`;
const Note = styled.p`
  margin: 7px 0 11px;
  padding-left: 4px;
  line-height: 17px;
  color: #6a6f73;
  white-space: pre-line;
`;
const EntryRow = styled.div`
  display: flex;
  align-items: center;
  gap: 6px;
  height: 24px;
`;
const EntryBox = styled.div`
  padding: 25px 6px 0;
  border: 1px solid #d3dce1;
`;
const TryBox = styled.div`
  margin: 20px 16px 0;
  padding: 0 1px 0 2px;
  border: 1px solid #d3dce1;
`;
const TryLabel = styled.div`
  height: 42px;
  line-height: 26px;
  font-weight: 700;
  color: #111;
`;
const Sequence = styled.div`
  display: flex;
  flex-direction: column;
  align-items: center;
  padding-top: 23px;
`;
const AssignGrid = styled.div`
  display: grid;
  grid-template-columns: 1fr 20px 1fr;
  padding: 2px 16px 5px;
`;
const FieldLabel = styled.label`
  display: block;
  line-height: 26px;
  color: #1d2429;
`;
const Equals = styled.span`
  line-height: 26px;
  text-align: center;
`;
const Expression = styled.div`
  flex: 1;
  display: flex;
  align-items: center;
  height: 26px;
  min-width: 0;
  border: 1px solid #cbd5da;
  color: #3a4a6b;
  input { flex: 1; padding-left: 4px; }
`;
const Braces = styled.span`
  display: grid;
  place-items: center;
  width: 20px;
  align-self: stretch;
  background: #f6f6f6;
  color: #1976d2;
`;
const ExprButton = styled.button`
  display: grid;
  place-items: center;
  align-self: stretch;
  width: 20px;
  ${(p) => p.$edge && css`background: #f6f8f9; border-left: 1px solid #cbd5da;`}
`;
const InvokeBody = styled.div`
  min-height: 70px;
  padding: 4px 16px;
`;
const InvokeRow = styled.div`
  display: flex;
  gap: 2px;
`;
const GreyButton = styled.button`
  display: grid;
  place-items: center;
  width: 23px;
  background: #e6e6e6;
  border: 1px solid #b0b0b0;
`;

const ScopeBar = styled.div`
  flex: none;
  display: flex;
  align-items: center;
  gap: 16px;
  height: 22px;
  padding: 0 6px;
  background: #f0f0f0;
  color: #2f3b44;
`;
const ScopeTools = styled.div`
  display: flex;
  align-items: center;
  gap: 11px;
  margin-left: auto;
`;
const ZoomSelect = styled.label`
  display: flex;
  align-items: center;
  width: 68px;
  select { flex: 1; }
`;

const OutputPanel = styled.section`
  flex: none;
  display: flex;
  flex-direction: column;
  height: 250px;
  margin-top: 6px;
  background: #fafafa;
  border: 1px solid #e0e3e5;
`;
const PanelHead = styled.div`
  flex: none;
  display: flex;
  align-items: center;
  gap: 9px;
  height: ${(p) => p.$h}px;
  padding: 0 7px 0 5px;
`;
const Grip = styled.span`
  flex: 1;
  height: 6px;
  background: radial-gradient(circle at 1px 1px, #bfc3c6 1px, transparent 1px) 0 0 / 4px 4px,
    radial-gradient(circle at 1px 1px, #bfc3c6 1px, transparent 1px) 2px 2px / 4px 4px;
`;
const OutputTools = styled.div`
  flex: none;
  display: flex;
  align-items: center;
  gap: 8px;
  height: 26px;
  padding: 0 3px 0 12px;
`;
const Filter = styled.button`
  display: flex;
  align-items: center;
  justify-content: center;
  gap: 3px;
  width: ${(p) => (p.$plain ? 16 : 33)}px;
  height: 24px;
  background: ${(p) => (p.$plain ? "none" : "#cbced2")};
  margin-right: ${(p) => (p.$plain ? 8 : 0)}px;
`;
const OutputSearch = styled.label`
  flex: none;
  display: flex;
  align-items: center;
  height: 26px;
  padding: 2px 4px 0 5px;
  background: #fff;
  border: 1px solid #d8dbdd;
  border-width: 1px 0 2px;
  input { flex: 1; }
  input::placeholder { font-style: italic; color: #777; opacity: 1; }
`;
const LogArea = styled.div`
  flex: 1;
  display: flex;
  min-height: 0;
  background: #fff;
`;
const LogList = styled.ol`
  flex: 1;
  min-width: 0;
  list-style: none;
  margin: 0;
  padding: 0 0 0 7px;
  overflow: hidden;
`;
const LogItem = styled.li`
  display: flex;
  gap: 6px;
  padding: 2px 0 3px;
  line-height: 16px;
  white-space: pre;
  color: ${(p) => (p.$error ? "#e8314a" : "#3c4a55")};
  svg { margin-top: 3px; }
`;
const LogScroll = styled.div`
  display: flex;
  flex-direction: column;
  align-items: center;
  width: 16px;
  padding: 6px 0 3px;
  background: #fafafa;
`;
const LogThumb = styled.div`
  width: 11px;
  height: 91px;
  margin: auto 0 2px;
  background: #dfe1e4;
`;
const DockTabs = styled.nav`
  flex: none;
  display: flex;
  align-items: flex-end;
  gap: 12px;
  height: 34px;
  color: #6d767d;
`;
const DockTab = styled.button`
  padding-bottom: 1px;
  border-bottom: 5px solid #e9ebed;
`;

const Properties = styled.aside`
  flex: none;
  display: flex;
  flex-direction: column;
  width: 299px;
  margin: 0 0 34px 8px;
  background: #fff;
  border: 1px solid #dcdfe1;
  color: #5a636a;
`;
const TypeName = styled.div`
  height: 28px;
  padding-left: 3px;
  background: #f5f6f6;
  border-top: 1px solid #dcdfe1;
  line-height: 27px;
  color: #39434b;
`;
const PropGroup = styled.button`
  display: flex;
  align-items: center;
  gap: 6px;
  height: 21px;
  padding: 0 0 0 2px;
  background: #f7f7f7;
  border: 1px dotted ${(p) => (p.$focus ? "#888" : "transparent")};
  font-weight: 700;
  color: #2a3036;
`;
const PropRow = styled.label`
  display: grid;
  grid-template-columns: 13px 169px 1fr;
  height: ${(p) => p.$h}px;
  border-right: 1px solid #f7f7f7;
`;
const Gutter = styled.span`
  background: #f7f7f7;
`;
const PropName = styled.span`
  display: flex;
  align-items: center;
  padding: 2px 0 0 5px;
  border: 1px solid #f1f2f2;
  border-width: 0 1px 1px 0;
`;
const PropValue = styled.span`
  display: flex;
  align-items: center;
  gap: 4px;
  min-width: 0;
  border-bottom: 1px solid #f1f2f2;
`;
const PropInput = styled.span`
  flex: 1;
  display: flex;
  align-self: stretch;
  min-width: 0;
  border: 1px solid ${(p) => (p.$bare ? "transparent" : "#dbe1e4")};
  input { flex: 1; width: 0; padding-left: 4px; color: #8d9296; }
  input::placeholder { font-style: italic; color: #8d9296; opacity: 1; }
`;
const DropButton = styled.button`
  display: grid;
  place-items: center;
  width: 16px;
  background: #f3f4f5;
  border-left: 1px solid #dbe1e4;
`;
const More = styled.button`
  width: 20px;
  height: 20px;
  background: #f7f7f7;
  border: 1px solid #d5d8da;
  line-height: 18px;
  color: #777;
`;
const Tick = styled.input`
  appearance: none;
  width: 14px;
  height: 14px;
  margin-left: ${(p) => (p.$fill ? 0 : 5)}px !important;
  border: ${(p) => (p.$fill ? 3 : 1)}px solid #d3d3d3 !important;
  background: ${(p) => (p.$fill ? "#8a8a8a" : "#ececec")} !important;
`;
const SessionSelect = styled.span`
  flex: 1;
  display: flex;
  align-items: center;
  align-self: stretch;
  padding: 0 4px;
  background: #f3f4f5;
  border: 1px solid #d5d8da;
  color: #8d9296;
  select { flex: 1; }
`;

const StudioStatus = styled.div`
  flex: none;
  display: flex;
  align-items: center;
  justify-content: flex-end;
  height: 24px;
  padding-right: 14px;
  background: #1976d2;
  color: #d5e6f8;
`;
const StatusCell = styled.button`
  display: flex;
  align-items: center;
  gap: 5px;
  margin-left: ${(p) => p.$gap || 20}px;
  font-weight: ${(p) => (p.$strong ? 600 : 400)};
  color: ${(p) => (p.$strong ? "#fff" : "inherit")};
`;

const off = "#c0c3c5";
const bigArt = {
  new: <Icon w={24} h={26} color={off}><path d="M16 24H2V1h11l6 6v9M13 1v7h6M20 18v7M16 22h8" /></Icon>,
  save: <Icon w={24} color={off}><path d="M1 1h22v22H5l-4-4zM6 1v10h12V1M7 23v-7h10v7M8 5h8M8 8h8M13 18v4" /></Icon>,
  stop: <Icon w={24}><path fill="#1976d2" stroke="none" d="M0 0h24v24H0z" /></Icon>,
  exportAs: <Icon w={24} h={26} color="#666"><path d="M9 24H2V1h11l6 6v6M13 1v7h6" /><path fill="#1976d2" stroke="none" d="M9 24c0-6 4-8 8-8v-4l7 6-7 6v-4c-4 0-6 1-8 4z" /></Icon>,
  packages: <Icon w={26}><g fill={off} stroke="none"><path d="m12 1 6 5-3 1v6h-6V7L6 6zM1 11l7 3v9l-7-4zM10 15l7-4 3 1v2l-7 4v5h-3z" /></g><circle cx="19" cy="19" r="5.500" fill="#fbfbfb" stroke={off} /><path stroke={off} d="M19 16v6M16 19h6" /></Icon>,
  entities: <Icon w={26} color={off} sw={1.8}><ellipse cx="17" cy="4" rx="7" ry="3" fill={off} /><ellipse cx="9" cy="9" rx="7" ry="3" /><path d="M2 9v12c0 4 14 4 14 0V9M2 13c0 4 14 4 14 0M2 17c0 4 14 4 14 0M24 4v12M17 21l2 3 4-4" /></Icon>,
  test: <Icon w={26} color="#555" sw={1.8}><path d="M7 1h8M9 1v8L2 23h13M13 1v8l3 5" /><path fill="#555" d="m5 17 6-3 4 1v8H2z" /><path stroke="#1976d2" fill="#fff" d="M16 16h8v8h-8zM18 16v-2h4v2M16 20h8" /></Icon>,
  record: <Icon w={24} color={off}><circle cx="12" cy="12" r="11" /><circle cx="12" cy="12" r="5" fill={off} stroke="none" /></Icon>,
  screen: <Icon w={24} h={20} color={off}><path d="M1 1h22v14H1zM12 15v3M6 19h12" /><path strokeDasharray="2 1" strokeWidth="1" d="M5 4h14v8H5z" /></Icon>,
  data: <Icon w={24} color={off}><path strokeDasharray="2 2" d="M1 1h22v22H1z" /><path strokeWidth="1.500" d="M5 7h14v10H5zM5 10.500h14M5 14h14M9.500 7v10M14 7v10" /></Icon>,
  events: <Icon w={24} color={off}><path d="M1 1h22v22H1z" /><path strokeDasharray="2 2" d="M4 6h10M4 10h7M4 14h4" /><rect x="13" y="11" width="7" height="10" rx="3" fill={off} stroke="none" /></Icon>,
  explorer: <Icon w={24}><path fill="#1976d2" stroke="none" d="M12 0 22 5v14l-10 5L2 19V5z" /><path stroke="#fff" strokeWidth="1.500" d="M6 8h12M9 8v8M9 12h8M9 16h8" /><g fill="#fff" stroke="none"><path d="M5 6h4v4H5zM15 6h4v4h-4zM15 10.500h4v3h-4zM15 14.500h4v3h-4z" /></g></Icon>,
  remove: <Icon w={24} color={off}><circle cx="12" cy="12" r="11" /><path strokeWidth="4" d="m7.500 7.500 9 9M16.500 7.500l-9 9" /></Icon>,
  analyze: <Icon w={24} color={off}><path d="M4 1H1v6c0 8 10 8 10 0V1H8M6 13v5c0 6 8 6 8 0v-3" /><circle cx="20" cy="4" r="3" /><path d="M20 7v7M16 14h7v9h-7z" /></Icon>,
  excel: <Icon w={24}><path fill={off} stroke="none" d="M1 3 15 0v24L1 21zM17 2h2v20h-2zM20 2h2v20h-2z" /><text x="8" y="17" fontSize="13" fill="#fff" {...glyph}>X</text></Icon>,
  publish: <Icon w={24} color={off}><path fill={off} stroke="none" d="m12 0 8 8h-5v11H9V8H4z" /><path d="M1 17v6h22v-6" /></Icon>,
};

const BigButton = ({ art, a, b, menu, live, w }) => (
  <Big $w={w} $live={live}>
    <BigArt>{bigArt[art]}</BigArt>
    <BigLine>{a}</BigLine>
    <BigLine>{b}{menu && <Chevron size={7} sw={1.5} color={live || menu === "dark" ? "#444" : "#999"} />}</BigLine>
  </Big>
);

const PlusRing = ({ size = 13, ring = "#8a9298", mark = "#1976d2" }) => (
  <Icon w={size} box="0 0 14 14" color={ring} sw={1}><circle cx="7" cy="7" r="6.300" /><path stroke={mark} strokeWidth="1.300" d="M7 3.500v7M3.500 7h7" /></Icon>
);
const Kebab = () => (
  <Icon w={4} h={15}><g fill="#444" stroke="none"><circle cx="2" cy="2" r="1.200" /><circle cx="2" cy="7.500" r="1.200" /><circle cx="2" cy="13" r="1.200" /></g></Icon>
);
const Fold = () => <Icon w={10} h={10} color="#555" sw={1.5}><path d="m1 5 4-4 4 4M1 9.500l4-4 4 4" /></Icon>;
const Expand = () => <Icon w={11} h={10} color="#777" sw={1}><path d="M1 5v4.500h4M6.500.5h4v4" /></Icon>;

const ExprField = ({ id, value }) => (
  <Expression>
    <Braces>{"{ }"}</Braces>
    <input id={id} defaultValue={value} />
    <ExprButton aria-label="Open editor"><Expand /></ExprButton>
    <ExprButton $edge aria-label="Use variable"><PlusRing /></ExprButton>
  </Expression>
);

const InfoDot = ({ color = "#4a6fe0", size = 8 }) => (
  <Icon w={size} box="0 0 14 14" color={color} sw={1.3}><circle cx="7" cy="7" r="6.200" /><path d="M7 3v1.500M7 6v5" /></Icon>
);
const WarnMark = ({ size = 8 }) => (
  <Icon w={size} box="0 0 14 14" color="#e8314a" sw={1.4}><path d="M7 1 13 13H1zM7 5v4M7 10.500v1" /></Icon>
);
const CheckMark = ({ color }) => (
  <Icon w={16} h={14} color={color} sw={1.5}><path d="M12 7v6H1V1h11" /><path strokeWidth="2" d="m4 6 3 4 7-9" /></Icon>
);

const docTabs = [
  "CheckCustomerNumbers...List (ReadOnly)",
  "Process (ReadOnly)",
  "Log Excel and Filter...Date (ReadOnly)",
  "Convert CSV to DT (ReadOnly)",
  "CheckNewFolder (ReadOnly)",
  "2. Send E-mail For L... 1&2 (ReadOnly)",
  "Test_filenamedate (ReadOnly)",
];

const logs = [
  { text: "Opening applications..." },
  { text: "CSV file is converted to XLSX." },
  { text: "Customer numbers are checked." },
  { text: "Card numbers in the list are compared with database." },
  { error: true, text: "Search GID (Search_GID): Connection Timeout Expired.  The timeout period elapsed while attempting to consume the pre-login handshake acknowledgement.  This could be because the pre-login handshake failed or the server was unable to respond back in time.  The duration spent\nwhile attempting to connect to this server was - [Pre-Login] initialization=33; handshake=14992;" },
  { error: true, text: "Invoke getInfoFromSCD workflow: Connection Timeout Expired.  The timeout period elapsed while attempting to consume the pre-login handshake acknowledgement.  This could be because the pre-login handshake failed or the server was unable to respond back in time.  The\nduration spent while attempting to connect to this server was - [Pre-Login] initialization=33; handshake=14992;" },
];

const props = [
  { group: "Common", focus: true },
  { name: "Continue On Error", kind: "expr", hint: "Specifies", tick: true, h: 24 },
  { name: "DisplayName", kind: "text", value: "Invoke ProcessTransaction workflow", h: 22 },
  { name: "Timeout", kind: "expr", hint: "Specifies the amount", h: 24 },
  { group: "Input" },
  { name: "Arguments", kind: "static", value: "(Collection)", h: 22 },
  { name: "ArgumentsVariable", kind: "expr", hint: "Enter a VB expression", h: 24 },
  { name: "Isolated", kind: "tick", h: 22 },
  { name: "WorkflowFileName", kind: "expr", value: '"Process.xaml"', h: 24 },
  { group: "Log" },
  { name: "Log Entry", kind: "combo", hint: "What type of", h: 25 },
  { name: "Log Exit", kind: "combo", hint: "What type of", h: 25 },
  { name: "LogLevel", kind: "combo", hint: "The logging", h: 25 },
  { group: "Misc" },
  { name: "Private", kind: "tick", h: 22 },
  { name: "Target Session", kind: "select", value: "Current", h: 24 },
];

const StaticValue = styled.span`
  flex: 1;
  color: #4a545b;
`;

function PropEditor({ kind, value, hint, tick }) {
  if (kind === "tick") return <Tick type="checkbox" />;
  if (kind === "static") return <><StaticValue>{value}</StaticValue><More>...</More></>;
  if (kind === "text") return <PropInput $bare><input defaultValue={value} /></PropInput>;
  if (kind === "select")
    return <SessionSelect><select><option>{value}</option></select><Triangle size={6} /></SessionSelect>;
  return (
    <>
      <PropInput>
        <input placeholder={hint} defaultValue={value} />
        {kind === "expr" && <ExprButton $edge aria-label="Use variable"><PlusRing /></ExprButton>}
        {kind === "combo" && <DropButton aria-label="Show options"><Triangle size={5} /></DropButton>}
      </PropInput>
      {tick && <Tick $fill type="checkbox" aria-label="Indeterminate" />}
      <More>...</More>
    </>
  );
}

const RailIcon = ({ kind }) => {
  if (kind === "toolbox") return <Icon w={16} h={14} color="#6d767d" sw={1.3}><path d="M1 1h9v12H1zM10 3c5 0 5 8 0 8M12 5v5" /><path stroke="#1976d2" strokeWidth="2" d="M4 4l3 6M7 4l-3 6" /></Icon>;
  if (kind === "repo") return <Icon w={16} color="#6d767d" sw={1.5}><path d="M1 1h9v9H1zM3 4h5M3 7h5M12 1h3v14h-3" /><circle cx="5" cy="12" r="3.500" fill="#e8683c" stroke="none" /><circle cx="8" cy="10" r="2" fill="#3b8ad9" stroke="none" /></Icon>;
  if (kind === "outline") return <Icon w={16} color="#6d767d" sw={1.5}><path strokeDasharray="3 2" d="M0 2h16M4 6h8" /><path d="M5 8v8M8 8v8M11 8v8" /></Icon>;
  if (kind === "flask") return <Icon w={16} color="#6d767d" sw={1.5}><path d="M15 1v7M15 4H8L1 10" /><circle cx="7" cy="10" r="4" stroke="#1976d2" strokeWidth="2" /><path stroke="#1976d2" d="m4 13-3 3" /></Icon>;
  if (kind === "snippet") return <Icon w={14} h={14} color="#6d767d" sw={1.5}><path d="M1 1h12v12H1zM4 5h6M4 9h6" /></Icon>;
  return <Icon w={14} h={16} color="#6d767d" sw={1.5}><path d="M2 1h10v14H2zM9 1v4h3" /></Icon>;
};

function StudioWindow() {
  return (
    <Screen>
      <StudioFrame>
        <StudioTitle>
          <StudioTabs>
            <StudioTab $w={71}>HOME</StudioTab>
            <StudioTab $w={72} $on>DESIGN</StudioTab>
            <StudioTab $w={70}>DEBUG</StudioTab>
          </StudioTabs>
          <span>CreditCardWarningSystem - UiPath Studio Community</span>
          <StudioTools>
            <WindowButton $w={32} aria-label="Search"><Icon w={16} color="#fff"><circle cx="10" cy="6" r="4.500" /><path d="m7 9-6 6" strokeWidth="2.500" /></Icon></WindowButton>
            <WindowButton $w={30} aria-label="Feedback"><Icon w={16} color="#d3e4f6" sw={1.2}><circle cx="6" cy="7" r="3" /><path d="M1 16c0-7 10-7 10 0M7 1h8v8h-3l-2 2" /></Icon></WindowButton>
            <WindowButton $w={38} aria-label="Help"><Icon w={16} color="#e6f0fa" sw={1.2}><circle cx="8" cy="8" r="7" /><path d="M5.500 6c0-3 5-3 5 0 0 2-2.500 2-2.500 4M8 11.500V13" /></Icon><Chevron size={7} sw={1.5} color="#fff" /></WindowButton>
            <Avatar>TÖ</Avatar>
            <WindowButton $w={52} aria-label="Minimize"><Icon w={10} h={2} color="#d3e4f6" sw={1.5}><path d="M0 1h10" /></Icon></WindowButton>
            <WindowButton $w={40} aria-label="Restore"><Icon w={11} color="#d3e4f6" sw={1}><path d="M1 3h7v7H1zM3 3V1h7v7H8" /></Icon></WindowButton>
            <WindowButton $w={44} aria-label="Close"><Cross size={11} color="#d3e4f6" sw={1.2} /></WindowButton>
          </StudioTools>
        </StudioTitle>

        <Ribbon>
          <Group $w={112}>
            <BigButton w={33} art="new" a="New" menu />
            <BigButton w={33} art="save" a="Save" menu="dark" />
            <BigButton w={33} art="stop" a="Stop" live />
          </Group>
          <Group $w={58}><BigButton w={50} art="exportAs" a="Export" b="As" menu live /></Group>
          <ClipGroup>
            <ClipButton><Icon w={18} h={14} color={off} sw={1.5}><path d="M6 0l6 10M12 0 6 10" /><circle cx="5" cy="11.500" r="2" /><circle cx="13" cy="11.500" r="2" /></Icon>Cut</ClipButton>
            <ClipButton><Icon w={18} h={16} color={off} sw={1.5}><path d="M9 12H2V1h6l2 2v2M7 5h6l3 3v7H7z" /></Icon>Copy</ClipButton>
            <ClipButton><Icon w={18} h={16} color={off} sw={1.5}><path d="M7 14H2V2h12v3M6 1h4v3H6zM8 6h8v9H8z" /></Icon>Paste</ClipButton>
            <ClipButton><Icon w={18} h={14} color={off} sw={1.5}><path d="M6 1 2 5l4 4M2 5h9c6 0 6 8 0 8H6" /></Icon>Undo</ClipButton>
            <ClipButton><Icon w={18} h={14} color={off} sw={1.5}><path d="m12 1 4 4-4 4M16 5H7c-6 0-6 8 0 8h5" /></Icon>Redo</ClipButton>
          </ClipGroup>
          <Group $w={74}><BigButton w={60} art="packages" a="Manage" b="Packages" /></Group>
          <Group $w={68}><BigButton w={60} art="entities" a="Manage" b="Entities" /></Group>
          <Group $w={82}><BigButton w={70} art="test" a="Test" b="Manager" menu live /></Group>
          <Group $w={243}>
            <BigButton w={62} art="record" a="Recording" menu />
            <BigButton w={57} art="screen" a="Screen" b="Scraping" />
            <BigButton w={55} art="data" a="Data" b="Scraping" />
            <BigButton w={54} art="events" a="User" b="Events" menu />
          </Group>
          <Group $w={69}><BigButton w={60} art="explorer" a="UI" b="Explorer" live /></Group>
          <Group $w={73}><BigButton w={60} art="remove" a="Remove" b="Unused" menu /></Group>
          <Group $w={62}><BigButton w={60} art="analyze" a="Analyze" b="File" menu="dark" /></Group>
          <Group $w={66}><BigButton w={60} art="excel" a="Export" b="to Excel" /></Group>
          <Group $w={59}><BigButton w={50} art="publish" a="Publish" menu="dark" /></Group>
          <Spacer />
          <RibbonFold aria-label="Collapse ribbon"><Chevron dir="up" size={10} color="#333" /></RibbonFold>
        </Ribbon>

        <StudioMain>
          <Rail>
            <RailTab><RailIcon /><RailText>Project</RailText></RailTab>
            <RailTab><RailIcon kind="toolbox" /><RailText>Activities</RailText></RailTab>
            <RailTab><RailIcon kind="snippet" /><RailText>Snippets</RailText></RailTab>
          </Rail>

          <Center>
            <Banner>
              <span>This project uses the Windows-legacy compatibility which is being phased out and will no longer be available for new projects in the next Enterprise release.</span>
              <BannerLink href="#">Convert to Windows</BannerLink>
              <BannerLink href="#">Learn More</BannerLink>
              <Spacer />
              <button aria-label="Dismiss"><Cross size={10} color="#222" /></button>
            </Banner>
            <DocTabs>
              <DocTab $on>Main (ReadOnly)<Cross size={10} color="#dceaf8" sw={1.2} /></DocTab>
              {docTabs.map((t) => <DocTab key={t}>{t}</DocTab>)}
              <Spacer />
              <ExprButton aria-label="All documents"><Chevron size={8} color="#555" sw={1.5} /></ExprButton>
            </DocTabs>
            <Crumbs>
              <a href="#">Main</a>
              <Chevron dir="right" size={8} color="#b9c0c5" sw={1.5} />
              <a href="#">General Business ...</a>
              <Chevron dir="right" size={8} color="#b9c0c5" sw={1.5} />
              <a href="#">Process Transaction</a>
              <CrumbActions>
                <button>Expand All</button>
                <button>Collapse All</button>
              </CrumbActions>
            </Crumbs>
            <CanvasWrap>
              <Canvas>
                <Card $w={581}>
                  <CardHead $accent>
                    <Icon w={16} h={15} color="#666" sw={1.2}><path d="M1 5V2h14v12H7" /><path fill="#666" d="M1 1h14v3H1z" /><circle cx="2.500" cy="9" r="1.500" /><path d="M2.500 11v4" /></Icon>
                    Process Transaction
                    <Spacer />
                    <HeadButton aria-label="Activity options"><Kebab /></HeadButton>
                  </CardHead>
                  <OuterBody>
                    <Note>{"A transaction either succeeds or fails with a Business Rule Exception or a System Error. For System\nError, it can be retried."}</Note>
                    <EntryRow>
                      <Icon w={13} h={12} color="#666" sw={1.2}><path d="M4 2a5 5 0 1 1 0 8M0 6h7M4 3.500 7 6 4 8.500" /></Icon>
                      Entry
                    </EntryRow>
                    <EntryBox>
                      <Card>
                        <CardHead $accent>
                          <Icon w={16} h={15} color="#555" sw={1.2}><path fill="#ccc" d="M1 5h14v9H1z" /><path fill="#444" stroke="none" d="M5 7h6v5H5zM7 0h2v3h2L8 6 5 3h2z" /></Icon>
                          Process Transaction
                          <Spacer />
                          <HeadButton aria-label="Activity options"><Kebab /></HeadButton>
                          <HeadButton aria-label="Collapse"><Fold /></HeadButton>
                        </CardHead>
                        <TryBox>
                          <TryLabel>Try</TryLabel>
                          <Card $dark>
                            <CardHead>
                              <Icon w={16} h={15} color="#777" sw={1.2}><path d="M3 2H1v11h2M13 2h2v11h-2" /><path fill="#1976d2" stroke="none" d="M6 0h4v3h2L8 7 4 3h2zM6 9h4v3h2l-4 3-4-3h2z" /></Icon>
                              Process the current TransactionItem
                              <Spacer />
                              <HeadButton aria-label="Activity options"><Kebab /></HeadButton>
                              <HeadButton aria-label="Collapse"><Fold /></HeadButton>
                            </CardHead>
                            <Sequence>
                              <button aria-label="Add activity"><PlusRing size={14} ring="#888" mark="#888" /></button>
                              <Icon w={10} h={4} />
                              <Card $w={433}>
                                <CardHead>
                                  <Icon w={16} h={14} color="#777" sw={1.2}><path d="M3 2C0 5 0 9 3 12M13 2c3 3 3 7 0 10" /><path stroke="#1976d2" strokeWidth="2" d="m5.500 4.500 5 5M10.500 4.500l-5 5" /></Icon>
                                  Assign
                                  <Spacer />
                                  <HeadButton aria-label="Activity options"><Kebab /></HeadButton>
                                </CardHead>
                                <AssignGrid>
                                  <FieldLabel htmlFor="save-to">Save to</FieldLabel>
                                  <span />
                                  <FieldLabel htmlFor="save-value">Value to save</FieldLabel>
                                  <ExprField id="save-to" value="BusinessRuleException" />
                                  <Equals>=</Equals>
                                  <ExprField id="save-value" value="Nothing" />
                                </AssignGrid>
                              </Card>
                              <Icon w={10} h={40} color="#8a8a8a" sw={1.2}><path d="M5 0v32" /><path fill="#8a8a8a" stroke="none" d="M0 30h10L5 40z" /></Icon>
                              <Card $w={334} $selected>
                                <CardHead $selected>
                                  <Icon w={14} h={16}><path fill="#5a5a5a" stroke="none" d="m0 0 12 8-12 8z" /></Icon>
                                  Invoke ProcessTransaction workflow
                                  <Spacer />
                                  <HeadButton aria-label="Activity options"><Kebab /></HeadButton>
                                  <HeadButton aria-label="Collapse"><Fold /></HeadButton>
                                </CardHead>
                                <InvokeBody>
                                  <FieldLabel htmlFor="workflow-file">Workflow file name</FieldLabel>
                                  <InvokeRow>
                                    <ExprField id="workflow-file" value={'"Process.xaml"'} />
                                    <GreyButton aria-label="Browse"><Icon w={17} h={12} color="#555" sw={1.3}><path d="M1 1h6l2 2h7v8H1z" /></Icon></GreyButton>
                                    <GreyButton>...</GreyButton>
                                  </InvokeRow>
                                </InvokeBody>
                              </Card>
                            </Sequence>
                          </Card>
                        </TryBox>
                      </Card>
                    </EntryBox>
                  </OuterBody>
                </Card>
              </Canvas>
              <CanvasScroll>
                <ScrollButton $h={15} $line="#b5b8ba" aria-label="Scroll up"><Triangle up size={6} color="#aaa" /></ScrollButton>
                <CanvasThumb />
                <Spacer />
                <ScrollButton $h={15} $line="#b5b8ba" aria-label="Scroll down"><Triangle size={6} color="#aaa" /></ScrollButton>
              </CanvasScroll>
            </CanvasWrap>
            <ScopeBar>
              <button>Variables</button>
              <button>Arguments</button>
              <button>Imports</button>
              <ScopeTools>
                <button aria-label="Pan"><Icon w={14} h={16}><path fill="#333" stroke="none" d="M3 8V3h1.500v4L5 1h1.500v6h.5V0h1.500v7L9 1h1.500v7l1-3H13l-1 8-2 3H6l-5-7 1-1z" /></Icon></button>
                <button aria-label="Zoom mode"><Icon w={14} color="#333"><circle cx="9" cy="5" r="4" /><path strokeWidth="3" d="m6 8-5 5" /><path strokeWidth="1" d="M9 3v4M7 5h4" /></Icon></button>
                <ZoomSelect><select aria-label="Zoom level"><option>100%</option></select><Triangle size={6} color="#222" /></ZoomSelect>
                <button aria-label="Fit to screen"><Icon w={15} color="#444" sw={1.5}><path d="M1 5V1h4M10 1h4v4M14 10v4h-4M5 14H1v-4M1 1l4 4M14 1l-4 4M14 14l-4-4M1 14l4-4" /><path fill="#bbb" d="M5 5h5v5H5z" /></Icon></button>
                <button aria-label="Overview"><Icon w={15} color="#444" sw={1.5}><path d="M1 1h13v13H1z" /><path strokeDasharray="2 1.500" d="M4 4l7 7M11 4l-7 7" /></Icon></button>
              </ScopeTools>
            </ScopeBar>

            <OutputPanel>
              <PanelHead $h={28}>
                Output<Grip /><Chevron size={8} color="#777" sw={1.5} /><Pin />
              </PanelHead>
              <OutputTools>
                <Filter $plain aria-label="Timestamps"><Icon w={15} color="#666" sw={1.3}><circle cx="7.500" cy="7.500" r="6.500" /><path d="M7.500 3v5l3 2" /></Icon></Filter>
                <Filter><WarnMark size={14} />2</Filter>
                <Filter><Icon w={14} color="#b5651d" sw={1.5}><path d="M1 1h12v12H1zM7 3v5M7 10v1.500" /></Icon>0</Filter>
                <Filter><InfoDot size={14} />6</Filter>
                <Filter><InfoDot size={14} color="#666" />1</Filter>
                <Filter><CheckMark color="#23923d" />0</Filter>
                <Filter><CheckMark color="#e02442" />0</Filter>
                <Filter $plain aria-label="Group entries"><Icon w={20} h={16} color="#666" sw={1.5}><path d="M1 1h4v4H1zM1 10h4v4H1zM8 2h11M8 6h11M8 12h4M16 9v6M14 13l2 2 2-2" /></Icon></Filter>
                <Filter $plain aria-label="Clear all"><Icon w={14} h={16} color="#777" sw={1.3}><path d="M2 4v11h10V4M0 3.500h14M5 3V1h4v2M5.500 7v6M8.500 7v6" /></Icon></Filter>
              </OutputTools>
              <OutputSearch>
                <input placeholder="Search" aria-label="Search output" />
                <Cross size={10} color="#222" />
              </OutputSearch>
              <LogArea>
                <LogList>
                  {logs.map((l) => (
                    <LogItem key={l.text} $error={l.error}>
                      {l.error ? <WarnMark /> : <InfoDot />}
                      <span>{l.text}</span>
                    </LogItem>
                  ))}
                </LogList>
                <LogScroll>
                  <Chevron dir="up" size={10} color="#666" sw={1.5} />
                  <LogThumb />
                  <Chevron size={10} color="#666" sw={1.5} />
                </LogScroll>
              </LogArea>
            </OutputPanel>
            <DockTabs>
              <DockTab>Find References</DockTab>
              <DockTab>Breakpoints</DockTab>
              <DockTab>Error List</DockTab>
            </DockTabs>
          </Center>

          <Properties>
            <PanelHead $h={25}>
              Properties<Grip /><Chevron size={9} color="#777" sw={1.5} /><Pin />
            </PanelHead>
            <TypeName>UiPath.Core.Activities.InvokeWorkflowFile</TypeName>
            {props.map((p) =>
              p.group ? (
                <PropGroup key={p.group} $focus={p.focus}>
                  <Icon w={9} color="#444" sw={1}><path d="M.5.5h8v8h-8zM2.500 4.500h4" /></Icon>
                  {p.group}
                </PropGroup>
              ) : (
                <PropRow key={p.name} $h={p.h}>
                  <Gutter />
                  <PropName>{p.name}</PropName>
                  <PropValue><PropEditor {...p} /></PropValue>
                </PropRow>
              )
            )}
          </Properties>

          <Rail $right>
            <RailTab $right><RailIcon kind="repo" /><RailText>Object Repository</RailText></RailTab>
            <RailTab $right><RailIcon kind="outline" /><RailText>Outline</RailText></RailTab>
            <RailTab $right><RailIcon kind="toolbox" /><RailText>Data Manager</RailText></RailTab>
            <RailTab $right><RailIcon kind="flask" /><RailText>Test Explorer</RailText></RailTab>
          </Rail>
        </StudioMain>

        <StudioStatus>
          <StatusCell aria-label="Notifications"><Icon w={10} h={12}><path fill="#6ba7e4" stroke="none" d="M0 0h10v12H0z" /><circle cx="5" cy="6" r="2" stroke="#1976d2" strokeWidth="1" /></Icon><Chevron size={7} color="#fff" sw={1.5} /></StatusCell>
          <StatusCell><Icon w={8}><circle cx="4" cy="4" r="4" fill="#4a8fd8" stroke="none" /></Icon>ozhazdayt@mef.edu.tr's wo...<Chevron size={7} color="#fff" sw={1.5} /></StatusCell>
          <StatusCell $gap={36}><Icon w={12} color="#7fb3e8" sw={3}><path d="M6 0v12M0 6h12" /></Icon>Add To Source Control<Chevron size={7} color="#fff" sw={1.5} /></StatusCell>
          <StatusCell $strong>VB, Windows - Legacy</StatusCell>
        </StudioStatus>
      </StudioFrame>

      <Bar $compact>
        <TaskApps compact />
        <Spacer />
        <Clock $compact><span>4:30 PM</span><span>1/11/2023</span></Clock>
      </Bar>
    </Screen>
  );
}

export default function App() {
  return (
    <>
      <Global />
      <Desktop>
        <MailWindow />
        <StudioWindow />
      </Desktop>
    </>
  );
}
